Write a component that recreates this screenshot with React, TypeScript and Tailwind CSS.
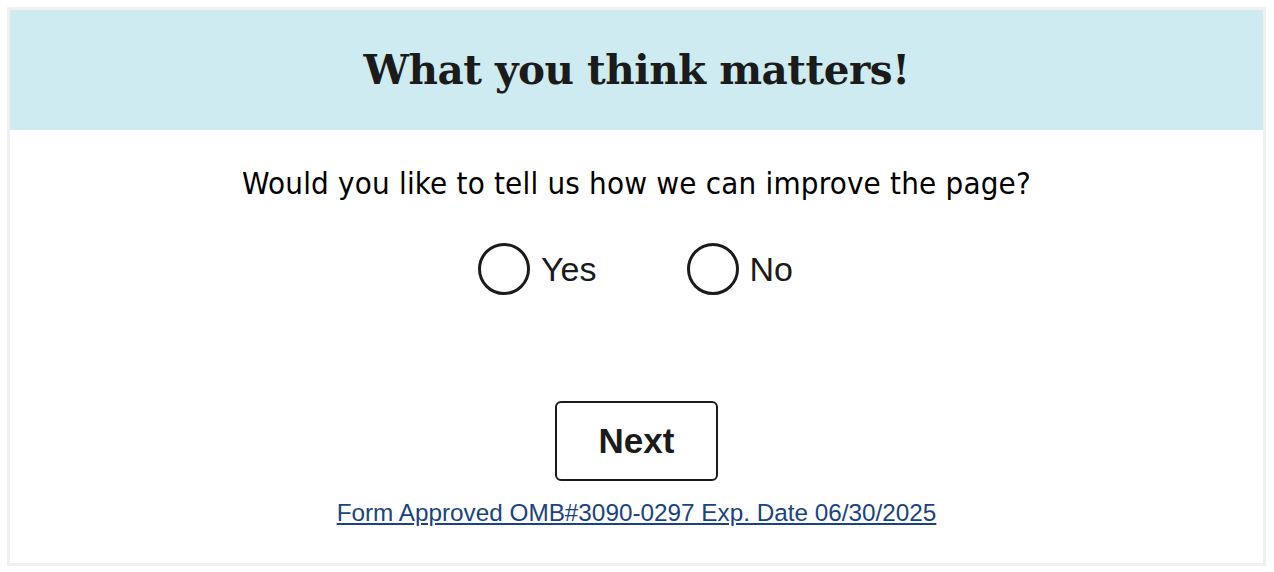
import React from "react";

function Radio({ label }: { label: string }) {
  return (
    <label className="flex items-center gap-[11px]">
      <span className="block h-[52px] w-[52px] rounded-full border-[3px] border-[#1b1b1b] bg-white" />
      <span className="text-[34px] leading-none text-[#1b1b1b]" style={{ fontFamily: '"Liberation Sans", Arial, sans-serif' }}>
        {label}
      </span>
    </label>
  );
}

export default function App() {
  return (
    <div className="min-h-[572px] w-[1274px] bg-white pt-[7px] pl-[7px]">
      <div className="flex h-[559px] w-[1259px] flex-col border-[3px] border-[#f0f0f0] bg-white">
        <div className="flex h-[120px] items-center justify-center bg-[#cdebf0]">
          <h1
            className="text-[40.5px] font-bold leading-none tracking-[-0.5px] text-[#1b1b1b]"
            style={{ fontFamily: '"DejaVu Serif", "Liberation Serif", serif' }}
          >
            What you think matters!
          </h1>
        </div>
        <div className="flex flex-col items-center">
          <p
            className="mt-[38px] text-[31px] leading-none tracking-[0.2px] text-black"
            style={{ fontFamily: '"DejaVu Sans Condensed", "DejaVu Sans", sans-serif' }}
          >
            Would you like to tell us how we can improve the page?
          </p>
          <div className="mt-[44px] mr-[2px] flex items-center gap-[90px]">
            <Radio label="Yes" />
            <Radio label="No" />
          </div>
          <button
            className="mt-[106px] flex h-[80px] w-[163px] items-center justify-center rounded-[6px] border-[2px] border-[#1b1b1b] bg-white text-[35px] font-bold text-[#1b1b1b]"
            style={{ fontFamily: '"Liberation Sans", Arial, sans-serif' }}
          >
            Next
          </button>
          <a
            href="#"
            className="mt-[20px] text-[24.3px] leading-none text-[#1a4480] underline"
            style={{ fontFamily: '"Liberation Sans", Arial, sans-serif' }}
          >
            Form Approved OMB#3090-0297 Exp. Date 06/30/2025
          </a>
        </div>
      </div>
    </div>
  );
}
